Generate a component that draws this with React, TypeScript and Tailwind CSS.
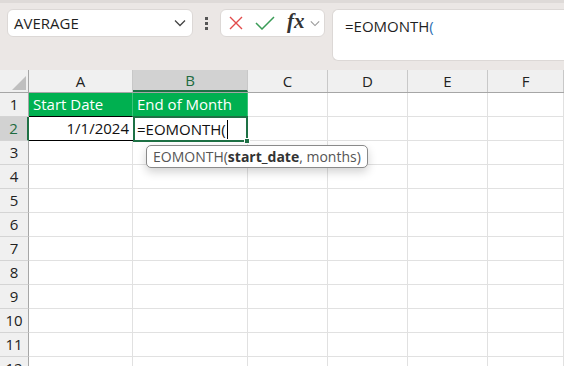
import React from "react";

const cols = [
  { key: "A", w: "w-[104px]" },
  { key: "B", w: "w-[115px]" },
  { key: "C", w: "w-[80px]" },
  { key: "D", w: "w-[80px]" },
  { key: "E", w: "w-[80px]" },
  { key: "F", w: "flex-1" },
];

const rows = [1, 2, 3, 4, 5, 6, 7, 8, 9, 10, 11, 12];

function Chevron({ className }: { className?: string }) {
  return (
    <svg viewBox="0 0 12 8" className={className} fill="none" stroke="currentColor" strokeWidth="1.3">
      <path d="M1 1.5l5 5 5-5" />
    </svg>
  );
}

function TopBar() {
  return (
    <div className="h-[70px] bg-[#ebe7e5] border-t-[3px] border-[#dedad8] flex items-start pt-[6px]">
      <div className="ml-[7px] w-[186px] h-[28px] rounded-[6px] bg-white border border-[#dcd8d6] flex items-center pl-[6px] pr-[6px]">
        <span className="text-[15px] text-[#1f1f1f] flex-1">AVERAGE</span>
        <Chevron className="w-[12px] h-[8px] text-[#444]" />
      </div>
      <div className="ml-[12px] h-[28px] flex flex-col justify-center gap-[2px]">
        <span className="w-[3px] h-[3px] bg-[#555]" />
        <span className="w-[3px] h-[3px] bg-[#555]" />
        <span className="w-[3px] h-[3px] bg-[#555]" />
      </div>
      <div className="ml-[12px] w-[105px] h-[28px] rounded-[6px] bg-white border border-[#dcd8d6] flex items-center">
        <svg viewBox="0 0 14 14" className="ml-[8px] w-[14px] h-[14px]" fill="none" stroke="#e24b4b" strokeWidth="1.4">
          <path d="M1 1l12 12M13 1L1 13" />
        </svg>
        <svg viewBox="0 0 20 14" className="ml-[12px] w-[20px] h-[14px]" fill="none" stroke="#3a9c57" strokeWidth="1.5">
          <path d="M1 7l6 6L19 1" />
        </svg>
        <span className="ml-[12px] text-[21px] leading-none italic font-semibold text-[#333] mb-[3px]" style={{ fontFamily: '"Liberation Serif", serif' }}>
          fx
        </span>
        <Chevron className="ml-[5px] w-[10px] h-[7px] text-[#999]" />
      </div>
      <div className="ml-[7px] flex-1 h-[52px] rounded-l-[6px] bg-white border border-r-0 border-[#dcd8d6] pl-[12px] pt-[4px]">
        <span className="text-[15px] text-[#1f1f1f]">
          =EOMONTH<span className="text-[#2f6fb5]">(</span>
        </span>
      </div>
    </div>
  );
}

function ColumnHeader() {
  return (
    <div className="h-[23px] flex bg-[#f0f0f0] border-b border-[#a6a6a6]">
      <div className="w-[29px] shrink-0 border-r border-[#a6a6a6] relative">
        <div className="absolute right-[2px] bottom-[2px] w-0 h-0 border-l-[14px] border-l-transparent border-b-[14px] border-b-[#bfbfbf]" />
      </div>
      {cols.map((c) => (
        <div
          key={c.key}
          className={`${c.w} shrink-0 flex items-center justify-center border-r border-[#c8c8c8] text-[15px] ${
            c.key === "B" ? "bg-[#d2d2d2] text-[#1e6b40] border-b-2 border-b-[#1e7145]" : "text-[#222]"
          }`}
        >
          {c.key}
        </div>
      ))}
    </div>
  );
}

function Cell({ col, row }: { col: string; row: number }) {
  const w = cols.find((c) => c.key === col)!.w;
  if (row === 1 && (col === "A" || col === "B")) {
    return (
      <div className={`${w} shrink-0 bg-[#00b050] text-white text-[15px] pl-[4px] flex items-center border-r border-[#3cc47a] border-b border-b-black`}>
        {col === "A" ? "Start Date" : "End of Month"}
      </div>
    );
  }
  if (row === 2 && col === "A") {
    return (
      <div className={`${w} shrink-0 text-[15px] text-[#111] pr-[4px] flex items-center justify-end border-b border-black`}>
        1/1/2024
      </div>
    );
  }
  if (row === 2 && col === "B") {
    return (
      <div className={`${w} shrink-0 relative border-2 border-[#1e7145] -mt-[1px] h-[26px] text-[15px] text-[#111] pl-[2px] flex items-center`}>
        =EOMONTH(<span className="w-[1px] h-[19px] bg-black ml-[1px]" />
        <div className="absolute -right-[4px] -bottom-[4px] w-[6px] h-[6px] bg-[#1e7145] border border-white" />
      </div>
    );
  }
  return <div className={`${w} shrink-0 border-r border-b border-[#e1e1e1]`} />;
}

export default function App() {
  return (
    <div className="w-[564px] h-[366px] overflow-hidden relative bg-white" style={{ fontFamily: '"Open Sans", "Noto Sans", sans-serif' }}>
      <TopBar />
      <ColumnHeader />
      {rows.map((r) => (
        <div key={r} className="h-[24px] flex">
          <div
            className={`w-[29px] shrink-0 flex items-center justify-center text-[15px] border-b border-[#d4d4d4] ${
              r === 2 ? "bg-[#d2d2d2] text-[#1e6b40] border-r-2 border-r-[#1e7145]" : "bg-[#f0f0f0] text-[#222] border-r border-r-[#a6a6a6]"
            }`}
          >
            {r}
          </div>
          {cols.map((c) => (
            <Cell key={c.key} col={c.key} row={r} />
          ))}
        </div>
      ))}
      <div className="absolute left-[146px] top-[145px] h-[23px] px-[6px] flex items-center rounded-[5px] border border-[#8a8a8a] bg-white shadow-[0_4px_10px_rgba(0,0,0,0.18)] text-[14px] text-[#555] whitespace-nowrap">
        EOMONTH(<b className="text-[#333]">start_date</b>, months)
      </div>
    </div>
  );
}
